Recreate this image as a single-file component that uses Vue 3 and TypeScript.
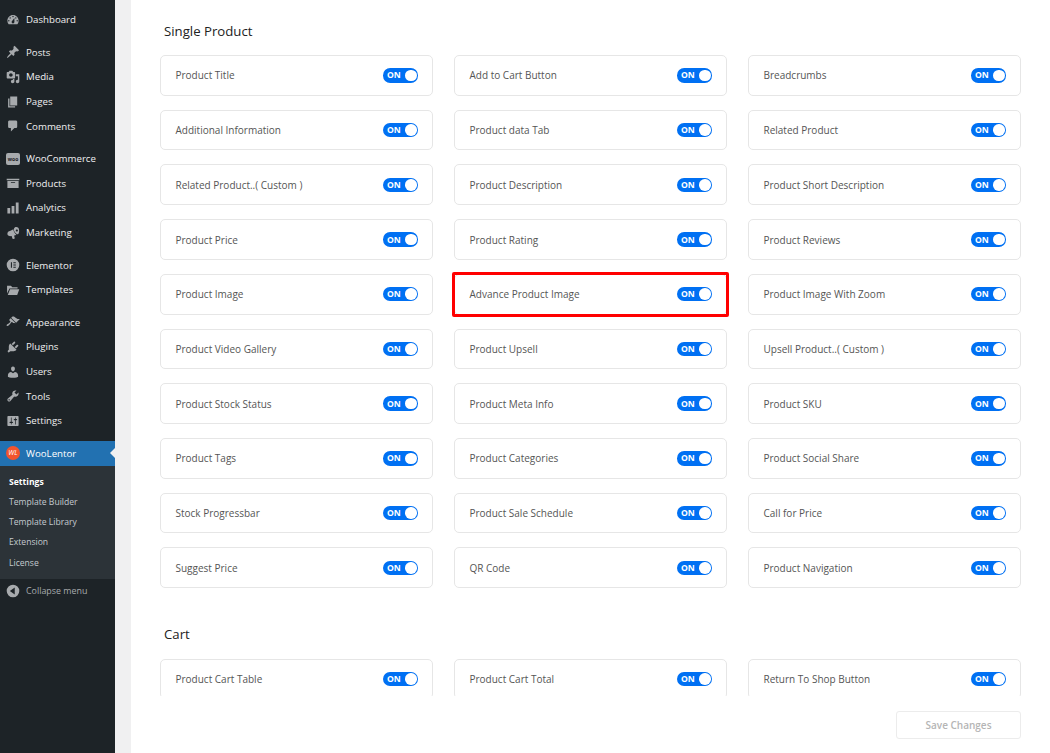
<script setup lang="ts">
interface MenuItem {
  label: string
  icon: string
  gapBefore?: boolean
}

const icons: Record<string, string> = {
  dashboard:
    'M3.76 16h12.48c1.1-1.37 1.76-3.11 1.76-5 0-4.42-3.58-8-8-8s-8 3.58-8 8c0 1.89.66 3.63 1.76 5zM10 4c.55 0 1 .45 1 1s-.45 1-1 1-1-.45-1-1 .45-1 1-1zM6 6c.55 0 1 .45 1 1s-.45 1-1 1-1-.45-1-1 .45-1 1-1zm8 0c.55 0 1 .45 1 1s-.45 1-1 1-1-.45-1-1 .45-1 1-1zm-5.37 5.55L12 7v6c0 1.1-.9 2-2 2s-2-.9-2-2c0-.57.24-1.08.63-1.45zM4 10c.55 0 1 .45 1 1s-.45 1-1 1-1-.45-1-1 .45-1 1-1zm12 0c.55 0 1 .45 1 1s-.45 1-1 1-1-.45-1-1 .45-1 1-1z',
  pin: 'M10.44 3.02l1.82-1.82 6.36 6.35-1.83 1.82c-1.05-.68-2.48-.57-3.41.36l-.75.75c-.92.93-1.04 2.35-.35 3.41l-1.83 1.82-2.41-2.41-2.8 2.79c-.42.42-3.38 2.71-3.8 2.29s1.86-3.39 2.28-3.81l2.79-2.79L4.1 9.36l1.83-1.82c1.05.69 2.48.57 3.4-.36l.75-.75c.93-.92 1.05-2.35.36-3.41z',
  media:
    'M13 11V4c0-.55-.45-1-1-1h-1.67L9 1H5L3.67 3H2c-.55 0-1 .45-1 1v7c0 .55.45 1 1 1h10c.55 0 1-.45 1-1zM7 4.5c1.38 0 2.5 1.12 2.5 2.5S8.38 9.5 7 9.5 4.5 8.38 4.5 7 5.62 4.5 7 4.5zM14 6h5v10.5c0 1.38-1.12 2.5-2.5 2.5S14 17.88 14 16.500s1.120-2.500 2.500-2.500c.17 0 .34.02.5.05V9h-3V6zm-4 8.050V13h2v3.500c0 1.380-1.120 2.500-2.500 2.500S7 17.880 7 16.500 8.120 14 9.500 14c.17 0 .34.02.5.05z',
  pages: 'M6 15V2h10v13H6zm-1 1h8v2H3V5h2v11z',
  comments: 'M5 2h9c1.100 0 2 .9 2 2v7c0 1.100-.9 2-2 2h-2l-5 5v-5H5c-1.100 0-2-.9-2-2V4c0-1.100.9-2 2-2z',
  products: 'M19 4v2H1V4h18zM2 7h16v10H2V7zm11 3V9H7v1h6z',
  analytics: 'M18 18V2h-4v16h4zm-6 0V7H8v11h4zm-6 0v-8H2v8h4z',
  marketing:
    'M17.500 2.500C19 4 19.500 9.500 17.500 11.500c-1.500 1-4.500-1-5.500-3.500s-1-5 .5-6c1.500-.7 3.700-.7 5 .5zM15.500 5c-.9 0-1.500.7-1.500 1.500S14.600 8 15.500 8 17 7.300 17 6.500 16.400 5 15.500 5zM10.500 4.500c0 2 1.500 6 4.500 8l-2.500 1-1 .2 1 3.300c.1.500-.2 1-.7 1.100l-1.500.4c-.5.100-1-.2-1.100-.7l-1.200-3.400C6 14.700 3.500 14.800 2.500 13s-.5-4 1-5.200c2.500-1.300 5-2 7-3.300z',
  elementor:
    'M10 1a9 9 0 1 0 0 18 9 9 0 0 0 0-18zM7 6h1.500v8H7V6zm3.500 0H14v1.600h-3.500V6zm0 3.200H14v1.600h-3.500V9.200zm0 3.200H14V14h-3.500v-1.600z',
  folder: 'M1.500 4h5.500l2 2h7.500v2H5L1.500 15V4zM5.800 9H19l-3 8H2.500z',
  brush:
    'M14.480 11.060L7.410 3.990l1.500-1.500c.5-.56 2.300-.47 3.510.32 1.210.8 1.430 1.280 2.910 2.100 1.180.64 2.450 1.260 4.450.85zm-.71.71L6.700 4.700 4.930 6.470c-.39.39-.39 1.020 0 1.410l1.060 1.060c.39.39.39 1.030 0 1.420-.6.6-1.430 1.110-2.210 1.690-.35.26-.7.53-1.010.84C1.430 13.230.4 14.890 1 15.500c.5.5 2.340-.25 4.170-2.080.3-.31.58-.65.84-1 .58-.78 1.090-1.620 1.690-2.210.39-.39 1.020-.39 1.410 0l1.060 1.060c.39.39 1.020.39 1.410 0z',
  plugins:
    'M13.110 4.360L9.870 7.600 8 5.730l3.240-3.240c.35-.34 1.050-.2 1.560.32.52.51.66 1.210.31 1.550zm-8 1.770l.91-1.120 9.010 9.010-1.190.84c-.71.71-2.630 1.160-3.820 1.160H6.140L4.900 17.260c-.59.59-1.540.59-2.120 0-.59-.58-.59-1.530 0-2.120l1.240-1.240v-3.880c0-1.130.4-3.190 1.090-3.890zm7.260 3.970l3.240-3.240c.34-.35 1.040-.21 1.550.31.52.51.66 1.210.31 1.550l-3.240 3.250z',
  users:
    'M10 9.250c-2.270 0-2.730-3.440-2.730-3.440C7 4.020 7.820 2 9.970 2c2.160 0 2.980 2.020 2.710 3.810 0 0-.41 3.440-2.680 3.440zm0 2.570L12.720 10c2.390 0 4.520 2.330 4.520 4.530v2.490s-3.650 1.130-7.240 1.130c-3.650 0-7.240-1.130-7.240-1.130v-2.490c0-2.250 1.940-4.480 4.470-4.480z',
  tools:
    'M16.680 9.770c-1.340 1.340-3.300 1.670-4.950.99l-5.410 6.520c-.99.99-2.590.99-3.580 0s-.99-2.590 0-3.570l6.520-5.420c-.68-1.650-.35-3.610.99-4.950 1.280-1.280 3.120-1.620 4.720-1.060l-2.890 2.890 2.820 2.820 2.860-2.870c.53 1.580.18 3.390-1.080 4.650zM3.810 16.210c.4.39 1.040.39 1.430 0 .4-.4.4-1.040 0-1.430-.39-.4-1.030-.4-1.430 0-.39.39-.39 1.030 0 1.430z',
  settings:
    'M18 16V4c0-.55-.45-1-1-1H3c-.55 0-1 .45-1 1v12c0 .55.45 1 1 1h14c.55 0 1-.45 1-1zM8 11h1c.55 0 1 .45 1 1s-.45 1-1 1H8v1.500c0 .28-.22.5-.5.5s-.5-.22-.5-.5V13H6c-.55 0-1-.45-1-1s.45-1 1-1h1V5.500c0-.28.22-.5.5-.5s.5.22.5.5V11zm5-2h-1c-.55 0-1-.45-1-1s.45-1 1-1h1V5.500c0-.28.22-.5.5-.5s.5.22.5.5V7h1c.55 0 1 .45 1 1s-.45 1-1 1h-1v5.500c0 .28-.22.5-.5.5s-.5-.22-.5-.5V9z',
  collapse: 'M10 1a9 9 0 1 0 0 18 9 9 0 0 0 0-18zM12.500 5v10l-7-5z',
}

const menu: MenuItem[] = [
  { label: 'Dashboard', icon: 'dashboard' },
  { label: 'Posts', icon: 'pin', gapBefore: true },
  { label: 'Media', icon: 'media' },
  { label: 'Pages', icon: 'pages' },
  { label: 'Comments', icon: 'comments' },
  { label: 'WooCommerce', icon: 'woo', gapBefore: true },
  { label: 'Products', icon: 'products' },
  { label: 'Analytics', icon: 'analytics' },
  { label: 'Marketing', icon: 'marketing' },
  { label: 'Elementor', icon: 'elementor', gapBefore: true },
  { label: 'Templates', icon: 'folder' },
  { label: 'Appearance', icon: 'brush', gapBefore: true },
  { label: 'Plugins', icon: 'plugins' },
  { label: 'Users', icon: 'users' },
  { label: 'Tools', icon: 'tools' },
  { label: 'Settings', icon: 'settings' },
]

const submenu = ['Settings', 'Template Builder', 'Template Library', 'Extension', 'License']

const singleProduct = [
  'Product Title', 'Add to Cart Button', 'Breadcrumbs',
  'Additional Information', 'Product data Tab', 'Related Product',
  'Related Product..( Custom )', 'Product Description', 'Product Short Description',
  'Product Price', 'Product Rating', 'Product Reviews',
  'Product Image', 'Advance Product Image', 'Product Image With Zoom',
  'Product Video Gallery', 'Product Upsell', 'Upsell Product..( Custom )',
  'Product Stock Status', 'Product Meta Info', 'Product SKU',
  'Product Tags', 'Product Categories', 'Product Social Share',
  'Stock Progressbar', 'Product Sale Schedule', 'Call for Price',
  'Suggest Price', 'QR Code', 'Product Navigation',
]

const cart = ['Product Cart Table', 'Product Cart Total', 'Return To Shop Button']
</script>

<template>
  <div class="page">
    <aside class="sidebar">
      <nav class="menu">
        <div
          v-for="item in menu"
          :key="item.label"
          class="menu-item"
          :class="{ spaced: item.gapBefore }"
        >
          <span v-if="item.icon === 'woo'" class="woo-icon">woo</span>
          <svg v-else class="menu-icon" viewBox="0 0 20 20" aria-hidden="true">
            <path :d="icons[item.icon]" fill-rule="evenodd" />
          </svg>
          <span>{{ item.label }}</span>
        </div>
        <div class="menu-item spaced current">
          <span class="wl-icon">WL</span>
          <span>WooLentor</span>
        </div>
        <div class="submenu">
          <div
            v-for="(sub, i) in submenu"
            :key="sub"
            class="sub-item"
            :class="{ active: i === 0 }"
          >
            {{ sub }}
          </div>
        </div>
        <div class="collapse">
          <svg class="menu-icon" viewBox="0 0 20 20" aria-hidden="true">
            <path :d="icons.collapse" fill-rule="evenodd" />
          </svg>
          <span>Collapse menu</span>
        </div>
      </nav>
    </aside>

    <main class="panel">
      <div class="scroll">
        <h2 class="section-title">Single Product</h2>
        <div class="grid">
          <div
            v-for="name in singleProduct"
            :key="name"
            class="card"
            :class="{ marked: name === 'Advance Product Image' }"
          >
            <span class="card-label">{{ name }}</span>
            <span class="toggle"><span class="toggle-text">ON</span><span class="knob"></span></span>
          </div>
        </div>
        <h2 class="section-title cart-title">Cart</h2>
        <div class="grid">
          <div v-for="name in cart" :key="name" class="card">
            <span class="card-label">{{ name }}</span>
            <span class="toggle"><span class="toggle-text">ON</span><span class="knob"></span></span>
          </div>
        </div>
      </div>
      <div class="footer">
        <button class="save" type="button" disabled>Save Changes</button>
      </div>
    </main>
  </div>
</template>

<style>
html,
body {
  margin: 0;
  background: #f0f0f1;
}
</style>

<style scoped>
* {
  box-sizing: border-box;
}

.page {
  display: flex;
  width: 1050px;
  height: 753px;
  overflow: hidden;
  background: #f0f0f1;
  font-family: "Open Sans", "Noto Sans", sans-serif;
}

.sidebar {
  flex: 0 0 115px;
  margin-right: 16px;
  background: #1d2327;
  color: #f0f0f1;
  font-size: 9.7px;
}

.menu {
  padding-top: 7.5px;
}

.menu-item {
  display: flex;
  align-items: center;
  gap: 6px;
  height: 24.6px;
  padding-left: 6px;
  position: relative;
}

.menu-item.spaced {
  margin-top: 8px;
}

.menu-icon {
  flex: 0 0 14px;
  width: 14px;
  height: 14px;
  fill: #a7aaad;
}

.woo-icon {
  flex: 0 0 14px;
  height: 12px;
  border-radius: 2px;
  background: #a7aaad;
  color: #1d2327;
  font-size: 5px;
  font-weight: 700;
  line-height: 12px;
  text-align: center;
}

.current {
  background: #2271b1;
  color: #fff;
}

.current::after {
  content: "";
  position: absolute;
  right: 0;
  top: 7px;
  border: 5px solid transparent;
  border-right-color: #f0f0f1;
  border-left: 0;
}

.wl-icon {
  flex: 0 0 14px;
  height: 14px;
  border-radius: 50%;
  background: #f2542d;
  color: #fff;
  font-size: 7px;
  font-style: italic;
  font-weight: 400;
  line-height: 14px;
  text-align: center;
}

.submenu {
  display: flex;
  flex-direction: column;
  height: 113px;
  padding-top: 6px;
  background: #2c3338;
}

.sub-item {
  height: 20.3px;
  padding-left: 9px;
  color: rgba(240, 246, 252, 0.78);
  font-size: 8.6px;
  line-height: 20.3px;
}

.sub-item.active {
  color: #fff;
  font-weight: 700;
}

.collapse {
  display: flex;
  align-items: center;
  gap: 6px;
  height: 24.6px;
  padding-left: 6px;
  color: #a7aaad;
  font-size: 8.9px;
}

.panel {
  flex: 1;
  display: flex;
  flex-direction: column;
  min-width: 0;
  background: #fff;
}

.scroll {
  height: 696px;
  overflow: hidden;
  padding: 22px 29px 0;
}

.section-title {
  margin: 0 0 15px 4px;
  color: #222;
  font-size: 13.2px;
  font-weight: 500;
  line-height: 18px;
}

.cart-title {
  margin-top: 37px;
  margin-bottom: 15.5px;
}

.grid {
  display: grid;
  grid-template-columns: repeat(3, 273px);
  column-gap: 21px;
  row-gap: 14px;
}

.card {
  position: relative;
  display: flex;
  align-items: center;
  justify-content: space-between;
  height: 40.72px;
  padding: 0 14px 0 14.5px;
  border: 1px solid #e6e6e6;
  border-radius: 5px;
  background: #fff;
}

.card.marked::after {
  content: "";
  position: absolute;
  inset: -3px;
  border: 3px solid #f00;
  border-radius: 2px;
}

.card-label {
  color: #555;
  font-size: 10px;
}

.toggle {
  display: flex;
  align-items: center;
  justify-content: space-between;
  width: 35px;
  height: 14.4px;
  padding: 0 1.5px 0 4px;
  border-radius: 7.2px;
  background: #0070f3;
}

.toggle-text {
  color: #fff;
  font-size: 8.6px;
  font-weight: 700;
  line-height: 14px;
}

.knob {
  width: 11.5px;
  height: 11.5px;
  border-radius: 50%;
  background: #fff;
}

.footer {
  display: flex;
  justify-content: flex-end;
  padding: 15px 29px 0;
}

.save {
  width: 125px;
  height: 28px;
  padding: 0;
  border: 1px solid #ececec;
  border-radius: 3px;
  background: #fff;
  color: #b5b5b5;
  font-family: inherit;
  font-size: 10px;
  font-weight: 600;
}
</style>
